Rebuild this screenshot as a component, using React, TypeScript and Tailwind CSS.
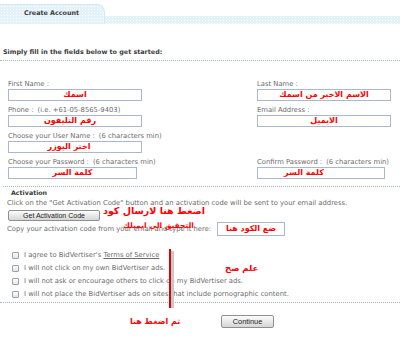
import React from 'react';

const Field: React.FC<{ label: string; hint?: string; ar: string; w: string; arPad?: string }> = ({ label, hint, ar, w, arPad = "" }) => (
  <div className="flex flex-col">
    <div className="h-[10px] leading-[10px] text-[6.8px] text-[#6b6b6b] whitespace-nowrap">
      {label}
      {hint && <span className="ml-[4px]">{hint}</span>}
    </div>
    <div className={`h-[12px] border border-[#a9b9cb] bg-white flex items-center justify-center ${w}`}>
      <span dir="rtl" className={`text-[#f00] font-bold text-[8px] leading-none ${arPad}`}>{ar}</span>
    </div>
  </div>
);

const Check: React.FC<{ children: React.ReactNode }> = ({ children }) => (
  <div className="h-[13px] flex items-center pl-[12px]">
    <span className="w-[7px] h-[7px] border border-[#9aa3ad] rounded-[1px] bg-linear-to-b from-white to-[#e2e4e8]" />
    <span className="ml-[5px] text-[6.8px] text-[#6b6b6b] whitespace-nowrap">{children}</span>
  </div>
);

export default function App() {
  return (
    <div className="relative w-[400px] h-[339px] overflow-hidden bg-white font-['DejaVu_Sans',Verdana,sans-serif]">
      {/* tab strip */}
      <div className="h-[24px] flex items-end">
        <div className="w-[105px] h-[20px] rounded-tr-[8px] border-t border-r border-[#d3e8f2] bg-[#e4f2f9] bg-[radial-gradient(circle,#ffffff_0.6px,transparent_0.9px)] bg-[length:3px_3px] flex items-center pl-[24px]">
          <span className="text-[6.4px] font-bold text-[#3d3d3d] -mt-[2px]">Create Account</span>
        </div>
        <div className="flex-1 h-[8px] bg-[#e4f2f9] bg-[radial-gradient(circle,#ffffff_0.6px,transparent_0.9px)] bg-[length:3px_3px]" />
      </div>

      <div className="mt-[23px] pl-[3px] pb-[3px] leading-[10px] text-[6.4px] font-bold text-[#3a3a3a] border-b border-dotted border-[#a8b4c4]">
        Simply fill in the fields below to get started:
      </div>

      <div className="pt-[18px] pb-[7px] pl-[8px] grid grid-cols-[246px_1fr] gap-y-[4px] border-b border-dotted border-[#a8b4c4] ml-[3px]">
        <div className="-ml-[3px]"><Field label="First Name :" ar="اسمك" w="w-[134px]" /></div>
        <Field label="Last Name :" ar="الاسم الاخير من اسمك" w="w-[134px]" />
        <div className="-ml-[3px]"><Field label="Phone :" hint="(i.e. +61-05-8565-9403)" ar="رقم التليفون" w="w-[134px]" arPad="mr-[10px]" /></div>
        <Field label="Email Address :" ar="الايميل" w="w-[134px]" />
        <div className="-ml-[3px]"><Field label="Choose your User Name :" hint="(6 characters min)" ar="اختر اليوزر" w="w-[134px]" arPad="mr-[12px]" /></div>
        <div />
        <div className="-ml-[3px]"><Field label="Choose your Password :" hint="(6 characters min)" ar="كلمة السر" w="w-[129px]" /></div>
        <Field label="Confirm Password :" hint="(6 characters min)" ar="كلمة السر" w="w-[128px]" arPad="mr-[34px]" />
      </div>

      <div className="mt-[1px] pl-[11px] h-[10px] leading-[10px] text-[6.3px] font-bold text-[#3a3a3a]">Activation</div>
      <div className="mt-[1px] pl-[7px] h-[9px] leading-[9px] text-[6.8px] text-[#6b6b6b] whitespace-nowrap">
        Click on the "Get Activation Code" button and an activation code will be sent to your email address.
      </div>
      <div className="mt-[2px] pl-[8px] flex">
        <button className="w-[92px] h-[11px] border border-[#8f8f8f] rounded-[2px] bg-linear-to-b from-[#fdfdfd] to-[#d6d6d6] text-[7px] leading-none text-[#222] font-['Liberation_Sans',Arial,sans-serif]">
          Get Activation Code
        </button>
      </div>
      <div className="mt-[1px] pl-[7px] h-[14px] flex items-center">
        <span className="w-[210px] text-[6.8px] text-[#6b6b6b] whitespace-nowrap overflow-hidden">Copy your activation code from your email and type it here:</span>
        <div className="w-[68px] h-[14px] border border-[#a9b9cb] bg-white flex items-center justify-center">
          <span dir="rtl" className="text-[#f00] font-bold text-[8px] leading-none">ضع الكود هنا</span>
        </div>
      </div>

      <div className="mt-[13px] pb-[1px] border-b border-dotted border-[#a8b4c4]">
        <Check>
          I agree to BidVertiser's <span className="underline">Terms of Service</span>
        </Check>
        <Check>I will not click on my own BidVertiser ads.</Check>
        <Check>I will not ask or encourage others to click on my BidVertiser ads.</Check>
        <Check>I will not place the BidVertiser ads on sites that include pornographic content.</Check>
      </div>

      <div className="mt-[12px] pl-[221px] flex">
        <button className="w-[53px] h-[13px] border border-[#8f8f8f] rounded-[2px] bg-linear-to-b from-[#fdfdfd] to-[#d6d6d6] text-[7.4px] leading-none text-[#222] font-['Liberation_Sans',Arial,sans-serif]">
          Continue
        </button>
      </div>

      {/* red annotations */}
      <span dir="rtl" className="absolute left-[103px] top-[206px] text-[#f00] font-bold text-[9.5px] leading-none whitespace-nowrap">اضغط هنا لارسال كود</span>
      <span dir="rtl" className="absolute left-[123px] top-[222px] text-[#f00] font-bold text-[7.5px] leading-none whitespace-nowrap">التحقيق الى ايميلك</span>
      <span dir="rtl" className="absolute left-[225px] top-[264px] text-[#f00] font-bold text-[8.5px] leading-none whitespace-nowrap">علم صح</span>
      <span dir="rtl" className="absolute left-[130px] top-[318px] text-[#f00] font-bold text-[8px] leading-none whitespace-nowrap">ثم اضغط هنا</span>
      <div className="absolute left-[169px] top-[249px] w-[2px] h-[59px] bg-[#e00000]" />
      <div className="absolute left-[171px] top-[251px] w-[3px] h-[57px] bg-[#c8c8c8]" />
    </div>
  );
}
